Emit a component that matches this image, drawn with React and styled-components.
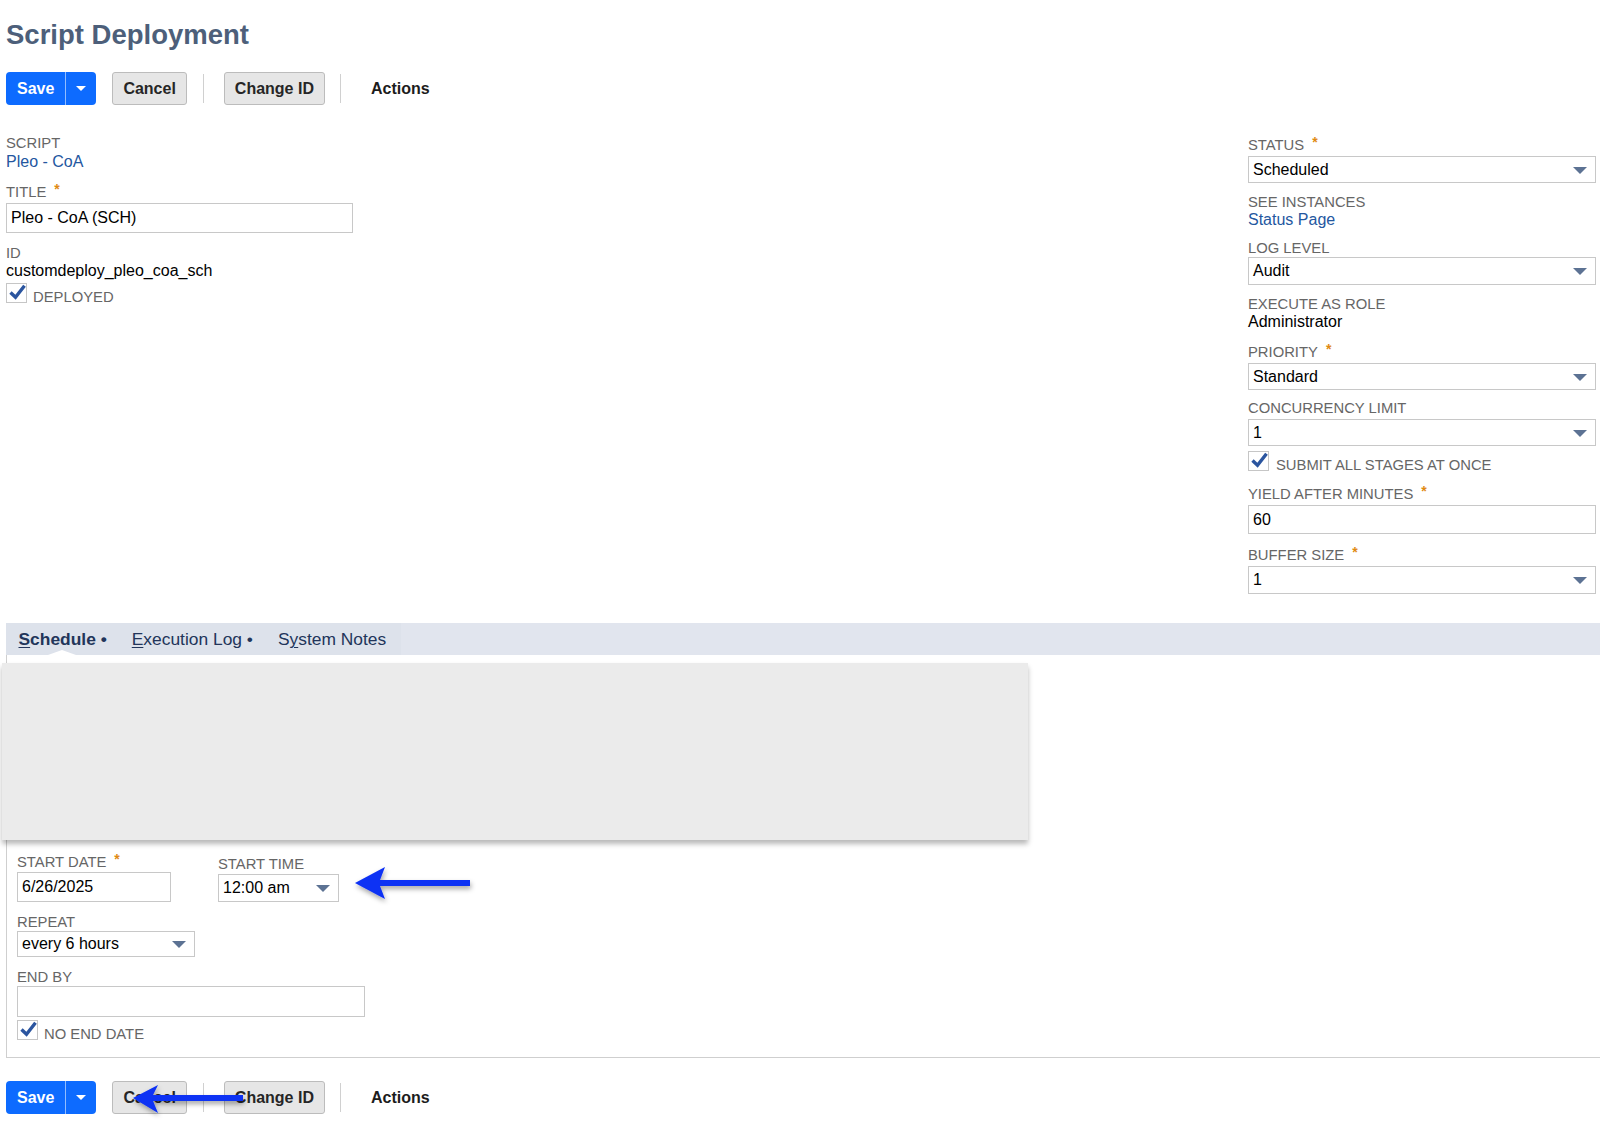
import React from 'react';
import styled, { createGlobalStyle } from 'styled-components';

const GlobalStyle = createGlobalStyle`
  html, body {
    margin: 0;
    padding: 0;
    background: #fff;
  }
  body {
    font-family: "Liberation Sans", Arial, Helvetica, sans-serif;
    color: #000;
  }
  * { box-sizing: border-box; }
`;

const Page = styled.div`
  position: relative;
  width: 1600px;
  min-height: 1131px;
  padding: 19px 4px 0 6px;
  overflow: hidden;
`;

const Title = styled.h1`
  margin: 0;
  font-size: 27.5px;
  line-height: 32px;
  font-weight: 700;
  color: #4d5f7a;
`;

const Toolbar = styled.div`
  display: flex;
  align-items: center;
  height: 33px;
  margin-top: ${p => p.$mt}px;
`;

const SplitButton = styled.div`
  display: flex;
  height: 33px;
  border-radius: 4px;
  background: #0d6bff;
  overflow: hidden;
`;

const SaveMain = styled.div`
  display: flex;
  align-items: center;
  padding: 0 11px;
  color: #fff;
  font-size: 16px;
  font-weight: 700;
`;

const SaveCaret = styled.div`
  width: 31px;
  display: flex;
  align-items: center;
  justify-content: center;
  border-left: 1px solid rgba(255, 255, 255, 0.55);
  &::before {
    content: '';
    border-top: 5px solid #fff;
    border-left: 5px solid transparent;
    border-right: 5px solid transparent;
  }
`;

const GrayButton = styled.div`
  display: flex;
  align-items: center;
  height: 33px;
  padding: 0 10px;
  margin-left: ${p => p.$ml}px;
  border: 1px solid #bcbcbc;
  border-radius: 3px;
  background: #e6e6e6;
  color: #262626;
  font-size: 16px;
  font-weight: 700;
`;

const ToolbarSep = styled.div`
  width: 1px;
  height: 29px;
  margin-left: ${p => p.$ml}px;
  background: #d0d0d0;
`;

const ActionsLink = styled.div`
  margin-left: 30px;
  font-size: 16px;
  font-weight: 700;
  color: #1c1c1c;
`;

const Form = styled.div`
  display: flex;
  justify-content: space-between;
  margin-top: 30px;
`;

const Column = styled.div`
  width: ${p => p.$w}px;
  padding-top: ${p => p.$pt || 0}px;
  display: flex;
  flex-direction: column;
`;

const Field = styled.div`
  display: flex;
  flex-direction: column;
  width: ${p => (p.$w ? `${p.$w}px` : 'auto')};
  margin-top: ${p => p.$mt || 0}px;
  margin-left: ${p => p.$ml || 0}px;
`;

const Label = styled.div`
  font-size: 14.8px;
  line-height: 17px;
  color: #666;
  white-space: nowrap;
  margin-bottom: ${p => p.$gap ?? 2}px;
`;

const Req = styled.span`
  position: relative;
  top: -3px;
  margin-left: 8px;
  font-size: 14px;
  font-weight: 700;
  color: #e08a12;
`;

const Value = styled.div`
  font-size: 16px;
  line-height: 18px;
  color: ${p => (p.$link ? '#24579f' : '#000')};
`;

const TextBox = styled.div`
  display: flex;
  align-items: center;
  position: relative;
  height: ${p => p.$h}px;
  width: ${p => (p.$w ? `${p.$w}px` : '100%')};
  padding: 0 4px;
  border: 1px solid #c8c8c8;
  background: #fff;
  font-size: 16px;
  color: #000;
`;

const SelectCaret = styled.span`
  position: absolute;
  right: 8px;
  top: 50%;
  margin-top: -3px;
  border-top: 7px solid #5c7293;
  border-left: 7px solid transparent;
  border-right: 7px solid transparent;
`;

const CheckRow = styled.div`
  display: flex;
  align-items: flex-end;
  margin-top: ${p => p.$mt || 0}px;
`;

const CheckBox = styled.div`
  width: 21px;
  height: 20px;
  border: 1px solid #c6c6c6;
  background: #fff;
  svg { display: block; }
`;

const CheckText = styled.span`
  margin-left: ${p => p.$ml || 6}px;
  margin-bottom: -3px;
  font-size: 14.8px;
  line-height: 17px;
  color: #666;
`;

const TabBar = styled.div`
  display: flex;
  height: 32px;
  margin: 29px -4px 0 0;
  background: #e1e5ee;
`;

const TabGroup = styled.div`
  display: flex;
  padding-right: 2px;
  background: #dde2eb;
`;

const Tab = styled.div`
  position: relative;
  padding: 0 12.5px;
  font-size: 17.4px;
  line-height: 32px;
  color: #22355a;
  font-weight: ${p => (p.$active ? 700 : 400)};
  white-space: nowrap;
  &::after {
    content: '';
    display: ${p => (p.$active ? 'block' : 'none')};
    position: absolute;
    left: 42px;
    bottom: 0;
    border-bottom: 5px solid #fff;
    border-left: 14px solid transparent;
    border-right: 14px solid transparent;
  }
`;

const AccessKey = styled.span`
  text-decoration: underline;
  text-decoration-thickness: 1px;
  text-underline-offset: 2px;
`;

const Panel = styled.div`
  position: relative;
  margin-right: -4px;
  padding: 199px 0 17px 10px;
  border-left: 1px solid #cfcfcf;
  border-bottom: 1px solid #cfcfcf;
`;

const Overlay = styled.div`
  position: absolute;
  top: 8px;
  left: -5px;
  width: 1026px;
  height: 177px;
  background: #ebebeb;
  box-shadow: 0 4px 5px rgba(0, 0, 0, 0.28);
`;

const DateRow = styled.div`
  display: flex;
  align-items: flex-end;
`;

const ArrowLayer = styled.svg`
  position: absolute;
  top: 0;
  left: 0;
  pointer-events: none;
`;

const Check = () => (
  <CheckBox>
    <svg width="19" height="18" viewBox="0 0 19 18">
      <path d="M3.5 8.5 L8.5 13.2 L17.5 1.8" fill="none" stroke="#2b559f" strokeWidth="3.4" strokeLinejoin="miter" />
    </svg>
  </CheckBox>
);

const Select = ({ value, w, h = 27 }) => (
  <TextBox $w={w} $h={h}>
    {value}
    <SelectCaret />
  </TextBox>
);

const ButtonBar = ({ mt }) => (
  <Toolbar $mt={mt}>
    <SplitButton>
      <SaveMain>Save</SaveMain>
      <SaveCaret />
    </SplitButton>
    <GrayButton $ml={16}>Cancel</GrayButton>
    <ToolbarSep $ml={16} />
    <GrayButton $ml={20}>Change ID</GrayButton>
    <ToolbarSep $ml={15} />
    <ActionsLink>Actions</ActionsLink>
  </Toolbar>
);

export default function App() {
  return (
    <>
      <GlobalStyle />
      <Page>
        <Title>Script Deployment</Title>
        <ButtonBar mt={21} />

        <Form>
          <Column $w={347}>
            <Field>
              <Label $gap={1}>SCRIPT</Label>
              <Value $link>Pleo - CoA</Value>
            </Field>
            <Field $mt={13}>
              <Label>TITLE<Req>*</Req></Label>
              <TextBox $h={30}>Pleo - CoA (SCH)</TextBox>
            </Field>
            <Field $mt={12}>
              <Label $gap={0}>ID</Label>
              <Value>customdeploy_pleo_coa_sch</Value>
            </Field>
            <CheckRow $mt={3}>
              <Check />
              <CheckText>DEPLOYED</CheckText>
            </CheckRow>
          </Column>

          <Column $w={348} $pt={2}>
            <Field>
              <Label>STATUS<Req>*</Req></Label>
              <Select value="Scheduled" />
            </Field>
            <Field $mt={11}>
              <Label $gap={0}>SEE INSTANCES</Label>
              <Value $link>Status Page</Value>
            </Field>
            <Field $mt={11}>
              <Label $gap={0}>LOG LEVEL</Label>
              <Select value="Audit" h={28} />
            </Field>
            <Field $mt={11}>
              <Label $gap={0}>EXECUTE AS ROLE</Label>
              <Value>Administrator</Value>
            </Field>
            <Field $mt={13}>
              <Label>PRIORITY<Req>*</Req></Label>
              <Select value="Standard" />
            </Field>
            <Field $mt={10}>
              <Label>CONCURRENCY LIMIT</Label>
              <Select value="1" />
            </Field>
            <CheckRow $mt={5}>
              <Check />
              <CheckText $ml={7}>SUBMIT ALL STAGES AT ONCE</CheckText>
            </CheckRow>
            <Field $mt={15}>
              <Label>YIELD AFTER MINUTES<Req>*</Req></Label>
              <TextBox $h={29}>60</TextBox>
            </Field>
            <Field $mt={13}>
              <Label>BUFFER SIZE<Req>*</Req></Label>
              <Select value="1" h={28} />
            </Field>
          </Column>
        </Form>

        <TabBar>
          <TabGroup>
            <Tab $active><AccessKey>S</AccessKey>chedule •</Tab>
            <Tab><AccessKey>E</AccessKey>xecution Log •</Tab>
            <Tab>S<AccessKey>y</AccessKey>stem Notes</Tab>
          </TabGroup>
        </TabBar>

        <Panel>
          <Overlay />
          <DateRow>
            <Field $w={154}>
              <Label $gap={1}>START DATE<Req>*</Req></Label>
              <TextBox $h={30}>6/26/2025</TextBox>
            </Field>
            <Field $w={121} $ml={47}>
              <Label $gap={1}>START TIME</Label>
              <Select value="12:00 am" h={28} />
            </Field>
          </DateRow>
          <Field $w={178} $mt={12}>
            <Label $gap={0}>REPEAT</Label>
            <Select value="every 6 hours" h={26} />
          </Field>
          <Field $w={348} $mt={12}>
            <Label $gap={0}>END BY</Label>
            <TextBox $h={31} />
          </Field>
          <CheckRow $mt={3}>
            <Check />
            <CheckText>NO END DATE</CheckText>
          </CheckRow>
        </Panel>

        <ButtonBar mt={23} />

        <ArrowLayer width="1600" height="1131" viewBox="0 0 1600 1131">
          <defs>
            <filter id="arrowShadow" x="-20%" y="-50%" width="140%" height="200%">
              <feDropShadow dx="1" dy="3" stdDeviation="2.5" floodColor="#000" floodOpacity="0.35" />
            </filter>
          </defs>
          <g fill="#0b30f4" filter="url(#arrowShadow)">
            <polygon points="355,883 385,867 380,880 470,880 470,886 380,886 385,899" />
            <polygon points="133,1098 158,1085 153,1095 243,1095 243,1101 153,1101 158,1113" />
          </g>
        </ArrowLayer>
      </Page>
    </>
  );
}
